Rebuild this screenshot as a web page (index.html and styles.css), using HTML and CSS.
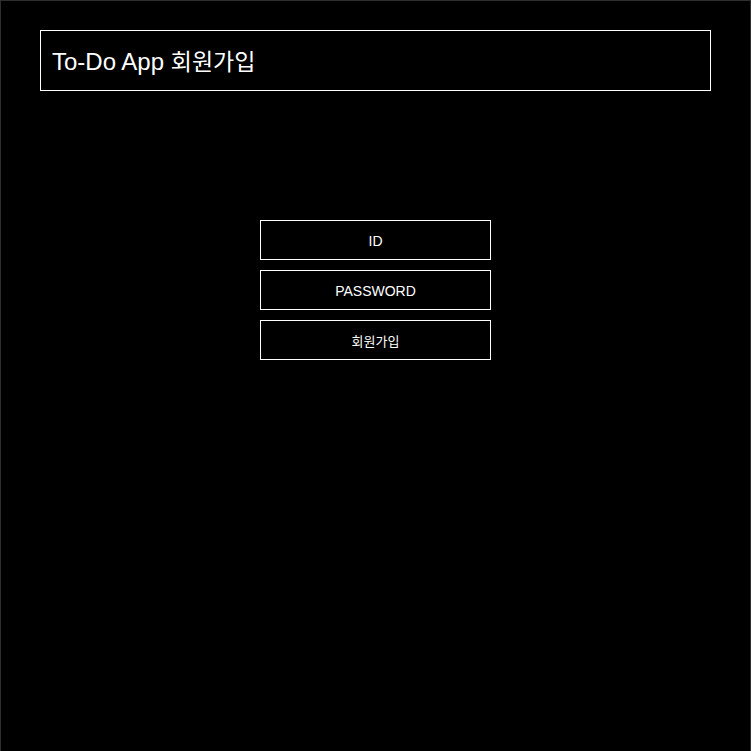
FILE: index.html
```html
<!DOCTYPE html>
<html lang="ko">
<head>
<meta charset="utf-8">
<title>To-Do App 회원가입</title>
<link rel="stylesheet" href="styles.css">
</head>
<body>
<div class="page">
  <header class="header">
    <h1 class="title">To-Do App <span class="title-ko">회원가입</span></h1>
  </header>
  <form class="form">
    <input class="field" type="text" placeholder="ID">
    <input class="field" type="password" placeholder="PASSWORD">
    <button class="field button" type="button">회원가입</button>
  </form>
</div>
</body>
</html>
```
FILE: styles.css
```css
html, body {
  margin: 0;
  padding: 0;
  background: #000;
}
body {
  font-family: "Liberation Sans", "Noto Sans CJK KR", sans-serif;
  color: #fff;
}
.page {
  box-sizing: border-box;
  min-height: 760px;
  border: 1px solid #2e2e2e;
  padding-top: 29px;
}
.header {
  box-sizing: border-box;
  margin: 0 39px;
  height: 61px;
  border: 1px solid #fff;
  display: flex;
  align-items: center;
  padding-left: 11px;
}
.title {
  margin: 0;
  font-size: 24px;
  font-weight: normal;
  line-height: 1;
  padding-top: 2px;
}
.title-ko {
  font-size: 23px;
}
.form {
  margin-top: 129px;
  display: flex;
  flex-direction: column;
  align-items: center;
  gap: 10px;
}
.field {
  box-sizing: border-box;
  width: 231px;
  height: 40px;
  margin: 0;
  padding: 2px 0 0;
  border: 1px solid #fff;
  border-radius: 0;
  background: #000;
  color: #fff;
  font-family: "Liberation Sans", "Noto Sans CJK KR", sans-serif;
  font-size: 14px;
  text-align: center;
  outline: none;
}
.field::placeholder {
  color: #fff;
  opacity: 1;
}
.button {
  font-size: 13px;
  padding-top: 0;
  cursor: pointer;
}
```
